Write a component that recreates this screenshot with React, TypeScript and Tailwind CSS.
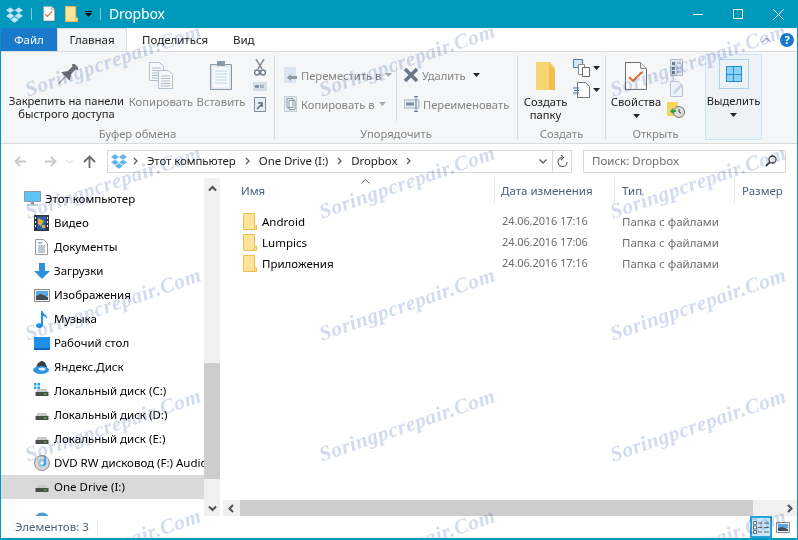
import React from "react";

const marks = [
  [112, 60], [406, 60], [697, 60],
  [112, 182], [406, 182], [697, 182],
  [112, 304], [406, 304], [697, 304],
  [112, 425], [406, 425], [697, 425],
  [112, 545], [406, 545], [697, 545],
];

const DropboxLogo = ({ color, size }: { color: string; size: number }) => (
  <svg width={size} height={size} viewBox="0 0 24 24" fill={color}>
    <path d="M6 2l6 4-6 4-6-4zM18 2l6 4-6 4-6-4zM0 14l6-4 6 4-6 4zM24 14l-6-4-6 4 6 4zM12 15.5l6 4-6 4-6-4z" />
  </svg>
);

const Folder = ({ w = 14, h = 17 }: { w?: number; h?: number }) => (
  <svg width={w} height={h} viewBox="0 0 14 17">
    <path d="M.5.5h11v12h2v4H.5z" fill="#fde49a" stroke="#eac050" />
    <path d="M11.5 12.5v4" stroke="#eac050" />
  </svg>
);

const Caret = ({ color = "#222" }: { color?: string }) => (
  <svg width="7" height="4" viewBox="0 0 7 4">
    <path d="M0 0h7L3.5 4z" fill={color} />
  </svg>
);

const Crumb = () => (
  <svg width="5" height="8" viewBox="0 0 5 8" className="shrink-0">
    <path d="M1 1l3 3-3 3" fill="none" stroke="#555" strokeWidth="1.200" />
  </svg>
);

const CheckDoc = ({ size }: { size: number }) => (
  <svg width={size} height={size * 1.27} viewBox="0 0 22 28">
    <path d="M.5.5h15l6 6v21H.5z" fill="#fbfbfb" stroke="#6f6f6f" />
    <path d="M15.5.5v6h6" fill="#e8e8e8" stroke="#8a8a8a" />
    <path d="M4 15l4 4 9-9" fill="none" stroke="#e2703a" strokeWidth="2.2" />
  </svg>
);

const Page = ({ x = 0, y = 0 }: { x?: number; y?: number }) => (
  <g transform={`translate(${x} ${y})`}>
    <path d="M.5.5h10l4 4v14H.5z" fill="#f6f8fb" stroke="#b4bfcc" />
    <path d="M3 6h9M3 8.5h9M3 11h9M3 13.5h9M3 16h9" stroke="#aebccd" />
  </g>
);

const Drive = ({ win }: { win?: boolean }) => (
  <svg width="16" height="16" viewBox="0 0 16 16">
    {win && <path d="M0 0h2.500v2.500H0zM3.500 0H6v2.500H3.500zM0 3.500h2.500V6H0zM3.500 3.500H6V6H3.500z" fill="#1ea7f0" />}
    <path d="M2 9l1.500-3h9L14 9z" fill="#c9c9c9" />
    <path d="M1.500 9h13v4h-13z" fill="#4d4d4d" />
    <path d="M10 10.500h2.500v1H10z" fill="#62d34d" />
  </svg>
);

const navItems: { label: string; icon: React.ReactNode; top?: boolean; active?: boolean; gap?: boolean }[] = [
  {
    label: "Этот компьютер",
    top: true,
    icon: (
      <svg width="17" height="16" viewBox="0 0 17 16">
        <path d="M.5.5h16v10H.5z" fill="#5fc3f4" stroke="#8a9aa8" />
        <path d="M7 11h3v2H7zM3 13.500h11v1H3z" fill="#8ba0b3" />
      </svg>
    ),
  },
  {
    label: "Видео",
    icon: (
      <svg width="15" height="16" viewBox="0 0 15 16">
        <path d="M0 0h15v16H0z" fill="#33363a" />
        <path d="M3 1.500h9v13H3z" fill="#2a5fb0" />
        <path d="M4 3l6 3-3 5-3-2zM8 10h3v3H8z" fill="#e0b030" />
        <path d="M1 2h1v2H1zM1 6h1v2H1zM1 10h1v2H1zM13 2h1v2h-1zM13 6h1v2h-1zM13 10h1v2h-1z" fill="#eee" />
      </svg>
    ),
  },
  {
    label: "Документы",
    icon: (
      <svg width="13" height="16" viewBox="0 0 13 16">
        <path d="M.5.5h8l4 4v11H.5z" fill="#fff" stroke="#9a9a9a" />
        <path d="M3 4h4" stroke="#2f88d8" />
        <path d="M3 7h7M3 9h7M3 11h7M3 13h7" stroke="#7d8fa3" />
      </svg>
    ),
  },
  {
    label: "Загрузки",
    icon: (
      <svg width="16" height="16" viewBox="0 0 16 16">
        <path d="M5 0h6v8h5l-8 8-8-8h5z" fill="#2f8fe0" />
      </svg>
    ),
  },
  {
    label: "Изображения",
    icon: (
      <svg width="16" height="13" viewBox="0 0 16 13">
        <path d="M.5.5h15v12H.5z" fill="#f0f0f0" stroke="#8a8a8a" />
        <path d="M2 2h12v5H2z" fill="#5aa6e0" />
        <path d="M2 7l5-2 7 3v3H2z" fill="#3f4d55" />
      </svg>
    ),
  },
  {
    label: "Музыка",
    icon: (
      <svg width="12" height="17" viewBox="0 0 12 17">
        <path d="M5 0h1.500c.5 3 5 3.500 4.500 8-1-2-3-3-4-3v9c0 2-2 3-4 3s-3-1-3-2.500S2 12 5 12.500z" fill="#2391e6" />
      </svg>
    ),
  },
  {
    label: "Рабочий стол",
    icon: (
      <svg width="16" height="13" viewBox="0 0 16 13">
        <path d="M0 0h16v13H0z" fill="#1f8fe8" />
        <path d="M0 11h16v2H0z" fill="#0b67b8" />
      </svg>
    ),
  },
  {
    label: "Яндекс.Диск",
    icon: (
      <svg width="17" height="13" viewBox="0 0 17 13">
        <path d="M3 7C4 2 7 0 9 0s4 2 5 6z" fill="#36414a" />
        <ellipse cx="8" cy="9" rx="8" ry="4" fill="#2c93e6" />
        <ellipse cx="9" cy="8" rx="3.500" ry="1.500" fill="#dff0fc" />
      </svg>
    ),
  },
  { label: "Локальный диск (C:)", icon: <Drive win /> },
  { label: "Локальный диск (D:)", icon: <Drive /> },
  { label: "Локальный диск (E:)", icon: <Drive /> },
  {
    label: "DVD RW дисковод (F:) Audio CD",
    icon: (
      <svg width="16" height="16" viewBox="0 0 16 16">
        <circle cx="8" cy="8" r="7.500" fill="#d4d6d8" stroke="#8f8f8f" />
        <circle cx="8" cy="8" r="4" fill="#93c5e8" />
        <circle cx="8" cy="8" r="1.500" fill="#fff" />
        <path d="M11 1v7c0 1-1 2-2 2" fill="none" stroke="#2391e6" strokeWidth="1.500" />
      </svg>
    ),
  },
  { label: "One Drive (I:)", icon: <Drive />, active: true },
  {
    label: "Сеть",
    gap: true,
    icon: (
      <svg width="16" height="16" viewBox="0 0 16 16">
        <circle cx="8" cy="8" r="7.500" fill="#4a97d8" />
        <path d="M3 5l4-2 2 3-3 3zM10 9l3-1-1 5z" fill="#6fb56a" />
      </svg>
    ),
  },
];

const files = [
  { name: "Android", date: "24.06.2016 17:16" },
  { name: "Lumpics", date: "24.06.2016 17:06" },
  { name: "Приложения", date: "24.06.2016 17:16" },
];

const ScrollChevron = ({ d }: { d: string }) => (
  <svg width="9" height="9" viewBox="0 0 9 9">
    <path d={d} fill="none" stroke="#505050" strokeWidth="2" />
  </svg>
);

const GroupLabel = ({ text }: { text: string }) => (
  <div className="text-center h-[14px] leading-[16px]">{text}</div>
);

const App: React.FC = () => {
  return (
    <div className="relative w-[798px] h-[540px] overflow-hidden flex flex-col bg-white border-x border-b-2 border-[#0099bc] text-[11.5px] text-black font-['Noto_Sans',sans-serif]">
      {/* title bar */}
      <div className="h-[28px] -mx-px shrink-0 bg-[#0099bc] flex items-center text-white">
        <div className="ml-[6px] w-[17px] flex"><DropboxLogo color="#c3e4f8" size={17} /></div>
        <div className="ml-[8px] w-px h-[12px] bg-[#7fcbdd]" />
        <div className="ml-[11px] flex"><CheckDoc size={12} /></div>
        <div className="ml-[10px] flex"><Folder w={13} h={16} /></div>
        <div className="ml-[7px] flex flex-col items-center gap-px">
          <div className="w-[7px] h-px bg-black" />
          <Caret color="#000" />
        </div>
        <div className="ml-[8px] w-px h-[12px] bg-[#7fcbdd]" />
        <span className="ml-[8px] text-[14px] tracking-[-0.2px] leading-none">Dropbox</span>
        <div className="ml-auto flex items-center">
          <div className="w-[40px] flex justify-center"><div className="w-[10px] h-px bg-white" /></div>
          <div className="w-[40px] flex justify-center"><div className="w-[10px] h-[10px] border border-white" /></div>
          <div className="w-[40px] flex justify-center">
            <svg width="11" height="11" viewBox="0 0 11 11"><path d="M.5.500l10 10M10.500.500l-10 10" stroke="#fff" /></svg>
          </div>
        </div>
      </div>

      {/* tabs */}
      <div className="h-[23px] shrink-0 flex items-stretch bg-white -mx-px">
        <div className="ml-px w-[56px] bg-[#1979ca] text-white flex items-center justify-center">Файл</div>
        <div className="w-[70px] bg-[#f5f6f7] border-x border-t border-[#dadbdc] flex items-center justify-center text-[#222]">Главная</div>
        <div className="ml-[15px] w-[64px] flex items-center text-[#222]">Поделиться</div>
        <div className="ml-[27px] flex items-center text-[#222]">Вид</div>
        <div className="ml-auto mr-[4px] flex items-center gap-[9px]">
          <svg width="9" height="6" viewBox="0 0 9 6"><path d="M.5 5l4-4 4 4" fill="none" stroke="#777" /></svg>
          <div className="w-[14px] h-[14px] rounded-full bg-[#1979ca] text-white text-[11px] font-bold leading-[14px] text-center">?</div>
        </div>
      </div>

      {/* ribbon */}
      <div className="h-[93px] shrink-0 bg-[#f5f6f7] border-y border-[#dadbdc] flex pt-[3px] text-[11.2px] text-[#848484] leading-[13px] whitespace-nowrap">
        {/* clipboard */}
        <div className="w-[274px] border-r border-[#dadbdc] flex flex-col mb-[3px]">
          <div className="flex-1 flex">
            <div className="w-[131px] pt-[9px] flex flex-col items-center text-[#222]">
              <svg width="22" height="22" viewBox="0 0 20 20" className="h-[22px]">
                <g transform="rotate(45 10 10)" fill="#6b7076">
                  <path d="M6.500-2h7v2.500h-7zM8 .5h4V7H8zM8 7h4l3.500 5h-11z" />
                  <path d="M9.500 12h1v9h-1z" fill="#8a8f95" />
                </g>
              </svg>
              <div className="mt-[8px] text-center">Закрепить на панели<br />быстрого доступа</div>
            </div>
            <div className="w-[58px] pt-[7px] flex flex-col items-center">
              <svg width="25" height="28" viewBox="0 0 25 28">
                <Page x={0} y={0} />
                <Page x={9} y={8} />
              </svg>
              <div className="mt-[5px]">Копировать</div>
            </div>
            <div className="w-[62px] pt-[6px] flex flex-col items-center">
              <svg width="22" height="29" viewBox="0 0 22 29">
                <path d="M.5 3.500h21v25H.5z" fill="#e3e9f0" stroke="#8b98a8" />
                <path d="M3 6.500h16v20H3z" fill="#f7f9fc" />
                <path d="M5 10h12M5 13h12M5 16h12M5 19h12M5 22h12" stroke="#bcd3ea" />
                <path d="M7 0h8v5H7z" fill="#8c98a6" />
              </svg>
              <div className="mt-[5px]">Вставить</div>
            </div>
            <div className="ml-[1px] pt-[4px] flex flex-col items-center gap-[6px]">
              <svg width="12" height="17" viewBox="0 0 12 17">
                <path d="M2 0l6 10M10 0L4 10" stroke="#8a8f95" strokeWidth="1.500" />
                <circle cx="3" cy="13.500" r="2.500" fill="none" stroke="#6f7c8c" strokeWidth="1.500" />
                <circle cx="9" cy="13.500" r="2.500" fill="none" stroke="#6f7c8c" strokeWidth="1.500" />
              </svg>
              <svg width="14" height="9" viewBox="0 0 14 9">
                <path d="M0 0h14v9H0z" fill="#d5dde8" />
                <path d="M2 3l1 3 1-3 1 3 1-3M8 3v3M10 3v3" stroke="#7b8796" fill="none" />
              </svg>
              <svg width="12" height="15" viewBox="0 0 12 15">
                <path d="M.5.500h11v14H.5z" fill="#e8edf3" stroke="#7f8c9c" />
                <path d="M3 12l5-5M4 6h4v4" fill="none" stroke="#5c6876" strokeWidth="1.500" />
              </svg>
            </div>
          </div>
          <GroupLabel text="Буфер обмена" />
        </div>

        {/* organize */}
        <div className="w-[243px] border-r border-[#dadbdc] flex flex-col mb-[3px]">
          <div className="flex-1 flex pl-[9px] pt-[12px]">
            <div className="w-[113px] h-[57px] -mt-[3px] pt-[3px] border-r border-[#dadbdc] flex flex-col gap-[13px]">
              <div className="flex items-center gap-[4px] h-[16px]">
                <svg width="13" height="16" viewBox="0 0 13 16">
                  <path d="M0 0h12v16H0z" fill="#dbe4ef" />
                  <path d="M13 9H7v-2l-4 3.500L7 14v-2h6z" fill="#8d99a8" />
                </svg>
                <span>Переместить в</span>
                <Caret color="#aaa" />
              </div>
              <div className="flex items-center gap-[4px] h-[16px]">
                <svg width="13" height="16" viewBox="0 0 13 16">
                  <path d="M.5.500h12v15H.5z" fill="#e3eaf2" stroke="#c3cedb" />
                  <path d="M3 2.500h6v9H3zM5 4.500h6v9H5z" fill="#f4f6f9" stroke="#8d99a8" />
                </svg>
                <span>Копировать в</span>
                <Caret color="#aaa" />
              </div>
            </div>
            <div className="ml-[7px] flex flex-col gap-[13px]">
              <div className="flex items-center gap-[4px] h-[16px]">
                <svg width="14" height="14" viewBox="0 0 14 14"><path d="M1 1l12 12M13 1L1 13" stroke="#68778c" strokeWidth="3.500" /></svg>
                <span>Удалить</span>
                <span className="ml-[3px] flex"><Caret /></span>
              </div>
              <div className="flex items-center gap-[3px] h-[16px]">
                <svg width="16" height="16" viewBox="0 0 16 16">
                  <path d="M0 4h15v8H0z" fill="#e3eaf2" stroke="#a5b1c0" />
                  <path d="M2 6.500h8v3H2z" fill="#7d8b9d" />
                  <path d="M12 0v16M10 .500h4M10 15.500h4" stroke="#6f7d90" />
                </svg>
                <span>Переименовать</span>
              </div>
            </div>
          </div>
          <GroupLabel text="Упорядочить" />
        </div>

        {/* new */}
        <div className="w-[88px] border-r border-[#dadbdc] flex flex-col mb-[3px]">
          <div className="flex-1 flex">
            <div className="w-[55px] pt-[7px] flex flex-col items-center text-[#222]">
              <svg width="20" height="28" viewBox="0 0 20 28">
                <path d="M0 0h14l5 6v22H0z" fill="#f7d671" />
                <path d="M13 0l6 8v20h-6z" fill="#eec04f" />
              </svg>
              <div className="mt-[5px] text-center">Создать<br />папку</div>
            </div>
            <div className="pt-[4px] flex flex-col gap-[5px]">
              <div className="flex items-center gap-[3px]">
                <svg width="17" height="18" viewBox="0 0 17 18">
                  <path d="M.5.500h9v8h-9z" fill="#d5e6f5" stroke="#4a7fb0" />
                  <path d="M5.500 5.500h6v10h-6z" fill="#fff" stroke="#888" />
                  <path d="M9.500 8.500h7v9h-7z" fill="#fff" stroke="#666" />
                </svg>
                <Caret />
              </div>
              <div className="flex items-center gap-[3px]">
                <svg width="17" height="16" viewBox="0 0 17 16">
                  <path d="M4.500.500h8l4 4v11h-12z" fill="#fff" stroke="#777" />
                  <path d="M0 6h6M1 8.500h5M0 11h6" stroke="#2f6fc0" strokeWidth="1.200" />
                </svg>
                <Caret />
              </div>
            </div>
          </div>
          <GroupLabel text="Создать" />
        </div>

        {/* open */}
        <div className="w-[99px] flex flex-col mb-[3px]">
          <div className="flex-1 flex">
            <div className="w-[60px] pt-[7px] flex flex-col items-center text-[#222]">
              <CheckDoc size={22} />
              <div className="mt-[5px]">Свойства</div>
              <div className="mt-[6px] flex"><Caret /></div>
            </div>
            <div className="ml-[1px] pt-[4px] flex flex-col gap-[5px]">
              <svg width="13" height="17" viewBox="0 0 13 17" className="ml-[3px]">
                <path d="M.5.500h12v16H.5z" fill="#dfe6ef" stroke="#b5c1cf" />
                <path d="M2 3h3v3H2zM2 8h3v3H2zM2 12h3v3H2z" fill="#6f7f92" />
                <path d="M7 4h4M7 9h4M7 13h4" stroke="#8d9aa9" />
              </svg>
              <svg width="14" height="16" viewBox="0 0 14 16" className="ml-[3px]">
                <path d="M.5.500h8l4 4v11H.5z" fill="#eef2f7" stroke="#b5c1cf" />
                <path d="M3 13l1-3 7-7 2 2-7 7z" fill="#c7d3e0" />
              </svg>
              <svg width="18" height="16" viewBox="0 0 18 16">
                <path d="M0 0h11v14H0z" fill="#f4d35e" />
                <circle cx="12" cy="10" r="5.500" fill="#ddd" stroke="#777" />
                <path d="M12 7v3l2 1" fill="none" stroke="#444" />
                <path d="M3 9l3-3v2h3v2H6v2z" fill="#2ea53a" />
              </svg>
            </div>
          </div>
          <GroupLabel text="Открыть" />
        </div>

        {/* select */}
        <div className="w-[57px] -mt-px mb-[3px] bg-[#edf2f7] border border-[#cde6f7] flex flex-col items-center text-[#222]">
          <div className="mt-[4px] w-[30px] h-[30px] border border-[#a8d4f2] flex items-center justify-center">
            <div className="grid grid-cols-2 gap-px bg-[#1f8fd8] border border-[#1f8fd8] w-[16px] h-[16px]">
              <div className="bg-[#8fd0f5]" /><div className="bg-[#8fd0f5]" /><div className="bg-[#8fd0f5]" /><div className="bg-[#8fd0f5]" />
            </div>
          </div>
          <div className="mt-[5px]">Выделить</div>
          <div className="mt-[6px] flex"><Caret /></div>
        </div>
      </div>

      {/* address bar */}
      <div className="h-[34px] shrink-0 flex items-center text-[#222]">
        <div className="w-[106px] flex items-center pl-[13px]">
          <svg width="13" height="11" viewBox="0 0 13 11"><path d="M12 5.500H2M6 1L1.500 5.500 6 10" fill="none" stroke="#c9c9c9" strokeWidth="1.800" /></svg>
          <svg width="13" height="11" viewBox="0 0 13 11" className="ml-[17px]"><path d="M1 5.500h10M7 1l4.500 4.500L7 10" fill="none" stroke="#c9c9c9" strokeWidth="1.800" /></svg>
          <svg width="7" height="5" viewBox="0 0 7 5" className="ml-[9px]"><path d="M.5 1l3 3 3-3" fill="none" stroke="#c9c9c9" /></svg>
          <svg width="13" height="13" viewBox="0 0 13 13" className="ml-[10px]"><path d="M6.500 13V2M1 7l5.500-5.500L12 7" fill="none" stroke="#6b6b6b" strokeWidth="1.800" /></svg>
        </div>
        <div className="w-[465px] h-[23px] border border-[#d9d9d9] flex items-center pl-[3px] tracking-[-0.1px]">
          <DropboxLogo color="#62b2ee" size={16} />
          <span className="ml-[6px] mr-[9px] flex"><Crumb /></span>
          <span>Этот компьютер</span>
          <span className="mx-[9px] flex"><Crumb /></span>
          <span>One Drive (I:)</span>
          <span className="mx-[9px] flex"><Crumb /></span>
          <span>Dropbox</span>
          <span className="ml-[9px] flex"><Crumb /></span>
          <div className="ml-auto w-[19px] h-full flex items-center justify-center">
            <svg width="8" height="5" viewBox="0 0 8 5"><path d="M.5.500L4 4 7.500.500" fill="none" stroke="#555" strokeWidth="1.200" /></svg>
          </div>
          <div className="w-[19px] h-full border-l border-[#d9d9d9] flex items-center justify-center">
            <svg width="11" height="13" viewBox="0 0 11 13"><path d="M5 2.500a4.500 4.500 0 1 0 5 4.500M4 0l2.500 2.500L4 5" fill="none" stroke="#555" strokeWidth="1.100" /></svg>
          </div>
        </div>
        <div className="ml-[11px] w-[203px] h-[23px] border border-[#d9d9d9] flex items-center pl-[8px] pr-[8px] text-[#6d6d6d]">
          <span>Поиск: Dropbox</span>
          <svg width="12" height="12" viewBox="0 0 12 12" className="ml-auto"><circle cx="7.500" cy="4.500" r="3.500" fill="none" stroke="#444" strokeWidth="1.300" /><path d="M5 7l-4 4" stroke="#444" strokeWidth="1.800" /></svg>
        </div>
      </div>

      {/* main */}
      <div className="flex-1 min-h-0 flex">
        {/* navigation */}
        <div className="w-[203px] shrink-0 overflow-hidden pt-[9px]">
          {navItems.map((item) => (
            <div key={item.label} className={`h-6 flex items-center whitespace-nowrap ${item.active ? "bg-[#d9d9d9]" : ""} ${item.top ? "pl-[23px]" : "pl-[32px]"} ${item.gap ? "mt-[9px]" : ""}`}>
              <div className="w-[17px] flex justify-center shrink-0">{item.icon}</div>
              <span className="ml-[4px]">{item.label}</span>
            </div>
          ))}
        </div>
        <div className="w-[16px] shrink-0 bg-[#f0f0f0] flex flex-col items-center justify-between">
          <div className="h-[20px] flex items-center"><ScrollChevron d="M1 6.500l3.500-3.500L8 6.500" /></div>
          <div className="w-full h-[116px] mt-[165px] bg-[#cdcdcd]" />
          <div className="h-[16px] mt-auto flex items-center"><ScrollChevron d="M1 2.500l3.500 3.500L8 2.500" /></div>
        </div>

        {/* file list */}
        <div className="flex-1 min-w-0 flex flex-col">
          <div className="flex-1 min-h-0 pl-[18px]">
            <div className="relative h-[26px] flex items-center text-[#4c607a]">
              <div className="w-[257px] h-full pl-[3px] border-r border-[#e5e5e5] flex items-center">Имя</div>
              <div className="w-[120px] h-full pl-[6px] border-r border-[#e5e5e5] flex items-center">Дата изменения</div>
              <div className="w-[120px] h-full pl-[7px] border-r border-[#e5e5e5] flex items-center">Тип</div>
              <div className="pl-[7px]">Размер</div>
              <svg width="9" height="5" viewBox="0 0 9 5" className="absolute left-[123px] top-px"><path d="M.5 4.500l4-4 4 4" fill="none" stroke="#666" /></svg>
            </div>
            <div className="pt-[7px]">
              {files.map((f) => (
                <div key={f.name} className="h-[21px] flex items-center">
                  <div className="w-[257px] pl-[5px] flex items-center gap-[5px]">
                    <Folder />
                    <span>{f.name}</span>
                  </div>
                  <div className="w-[120px] pl-[7px] text-[11px] tracking-[-0.1px] text-[#6d6d6d]">{f.date}</div>
                  <div className="pl-[7px] text-[#6d6d6d]">Папка с файлами</div>
                </div>
              ))}
            </div>
          </div>
          <div className="h-[16px] shrink-0 ml-[3px] bg-[#f0f0f0] flex items-center">
            <div className="w-[17px] flex justify-center"><ScrollChevron d="M6 1L2.500 4.500 6 8" /></div>
            <div className="w-[513px] h-full bg-[#cdcdcd]" />
            <div className="flex-1 flex justify-end pr-[3px]"><ScrollChevron d="M3 1l3.500 3.500L3 8" /></div>
          </div>
        </div>
      </div>

      {/* status bar */}
      <div className="h-[22px] shrink-0 flex items-center bg-white relative text-[#4c607a]">
        <span className="ml-[14px] w-[82px]">Элементов: 3</span>
        <div className="w-px h-[14px] bg-[#e5e5e5]" />
        <div className="ml-auto mr-[7px] flex items-center gap-[4px] h-full">
          <div className="w-[22px] h-full bg-[#c9e6f7] border-2 border-[#26a0da] flex items-center justify-center">
            <svg width="16" height="13" viewBox="0 0 16 13">
              <path d="M.5.500h3v3h-3zM.5 5h3v3h-3zM.5 9.500h3v3h-3z" fill="#fff" stroke="#666" />
              <path d="M5 2h4M11 2h5M5 6.500h4M11 6.500h5M5 11h4M11 11h5" stroke="#666" />
            </svg>
          </div>
          <svg width="14" height="11" viewBox="0 0 14 11">
            <path d="M.5.500h13v10H.5z" fill="#f0f0f0" stroke="#888" />
            <path d="M2 2h10v4H2z" fill="#5aa6e0" />
            <path d="M2 6l4-1 6 2v2H2z" fill="#3f4d55" />
          </svg>
        </div>
      </div>

      {/* watermark over the whole window */}
      <div className="absolute inset-0 overflow-hidden pointer-events-none mix-blend-multiply">
        {marks.map(([x, y]) => (
          <div
            key={`${x}-${y}`}
            className="absolute w-[220px] -ml-[110px] -mt-[15px] h-[30px] text-center -rotate-[19deg] whitespace-nowrap italic font-bold text-[21px] leading-[30px] tracking-[0.5px] text-[#d3dcef] font-['Liberation_Serif',serif]"
            style={{ left: x, top: y }}
          >
            Soringpcrepair.Com
          </div>
        ))}
      </div>
    </div>
  );
};

export default App;
